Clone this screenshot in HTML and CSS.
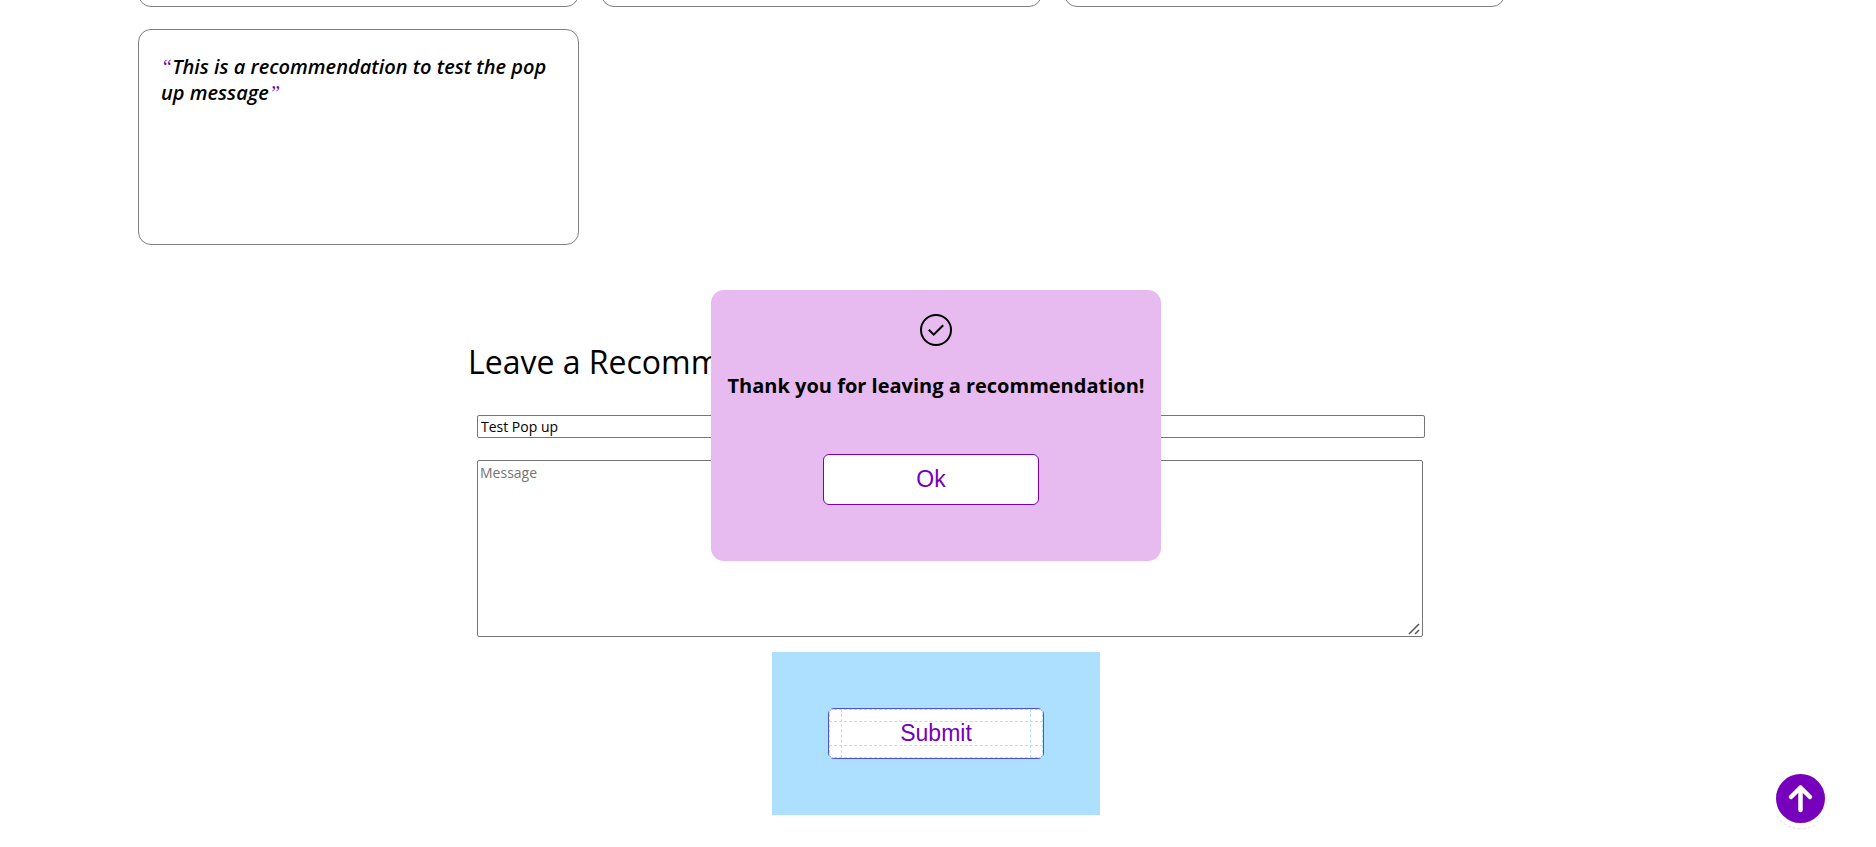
FILE: index.html
```html
<!DOCTYPE html>
<html lang="en">
<head>
<meta charset="utf-8">
<title>Recommendations</title>
<link rel="stylesheet" href="styles.css">
</head>
<body>
<main class="page">
  <section class="cards" aria-label="Recommendations">
    <blockquote class="card"></blockquote>
    <blockquote class="card"></blockquote>
    <blockquote class="card"></blockquote>
    <blockquote class="card"><span class="quote">“</span>This is a recommendation to test the pop up message<span class="quote">”</span></blockquote>
  </section>

  <form class="form">
    <div class="fields">
      <h2 class="title">Leave a Recommendation</h2>
      <input class="field name" type="text" value="Test Pop up" aria-label="Name">
      <textarea class="field message" placeholder="Message" aria-label="Message"></textarea>
    </div>
    <div class="submit-area">
      <button class="button submit" type="button">Submit
        <span class="guide guide-edge"></span>
        <span class="guide guide-rows"></span>
        <span class="guide guide-columns"></span>
      </button>
    </div>
  </form>
</main>

<div class="overlay">
  <div class="popup" role="dialog" aria-labelledby="popup-text">
    <svg class="check" viewBox="0 0 32 32" fill="none" stroke="#000" stroke-width="2" aria-hidden="true">
      <circle cx="16" cy="16" r="15"/>
      <path d="M8.800 15.800 13.700 20.700 23.200 11.200"/>
    </svg>
    <p class="popup-text" id="popup-text">Thank you for leaving a recommendation!</p>
    <button class="button ok" type="button">Ok</button>
  </div>
</div>

<a class="to-top" href="#" aria-label="Back to top">
  <svg viewBox="0 0 52 56" fill="none" aria-hidden="true">
    <path d="M2 42A28 28 0 0 0 40 51" stroke="#ead8f6" stroke-width="1" stroke-dasharray="3 2"/>
    <circle cx="25.500" cy="24.500" r="24.500" fill="#7600bc"/>
    <path d="M25.500 36V14M16 23 25.500 13.500 35 23" stroke="#fff" stroke-width="4.500" stroke-linecap="round" stroke-linejoin="round"/>
  </svg>
</a>
</body>
</html>
```
FILE: styles.css
```css
* { box-sizing: border-box; }

body {
  margin: 0;
  background: #fff;
  color: #000;
  font-family: "Trebuchet MS", "Open Sans", sans-serif;
  overflow: hidden;
}

.page {
  margin-top: -209px;
  padding-right: 4px;
}

.cards {
  display: grid;
  grid-template-columns: repeat(3, 1fr);
  gap: 22px;
  margin: 0 19.600% 0 138px;
}

.card {
  height: 216px;
  margin: 0;
  padding: 24px 22px;
  border: 1px solid #808080;
  border-radius: 13px;
  font-size: 20px;
  font-style: italic;
  font-weight: 600;
  line-height: 26px;
}

.quote {
  color: #7600bc;
  font-family: "Liberation Serif", serif;
  font-size: 20px;
  font-weight: 400;
  line-height: 20px;
}

.fields {
  display: flex;
  flex-direction: column;
  padding: 95px 24% 0 25%;
}

.title {
  margin: 0 0 31px;
  font-size: 32px;
  font-weight: 400;
  line-height: 44px;
}

.field {
  margin: 0 0 0 9px;
  border: 1px solid #767676;
  border-radius: 2px;
  background: #fff;
  font-family: inherit;
  font-size: 14px;
}

.name {
  height: 23px;
  margin-right: -2px;
  padding: 1px 3px;
}

.message {
  height: 177px;
  margin-top: 22px;
  padding: 2px;
}

.message::placeholder { color: #757575; }

.message::-webkit-resizer {
  background: url("data:image/svg+xml,%3Csvg xmlns='http://www.w3.org/2000/svg' viewBox='0 0 15 15'%3E%3Cpath d='M2 13 12 3M8 13l4-4' stroke='%23555' stroke-width='1.500'/%3E%3C/svg%3E") center / 100% no-repeat;
}

.submit-area {
  width: fit-content;
  margin: 15px auto 0;
  padding: 56px;
  background: #addfff;
}

.button {
  display: block;
  width: 216px;
  height: 51px;
  padding: 11px 12px 13px;
  border: 1px solid #7600bc;
  border-radius: 6px;
  background: #fff;
  color: #7600bc;
  font-family: "Liberation Sans", Arial, sans-serif;
  font-size: 23px;
  line-height: 24px;
}

.submit {
  position: relative;
  border-color: #4a50e0;
}

.guide {
  position: absolute;
  border: 0 dashed #addfff;
}

.guide-edge {
  inset: 0;
  border-width: 1px;
}

.guide-rows {
  inset: 12px 0;
  border-width: 1px 0;
}

.guide-columns {
  inset: 0 12px;
  border-width: 0 1px;
}

.overlay {
  position: fixed;
  inset: 0 4px 0 0;
  display: grid;
  place-items: center;
  pointer-events: none;
}

.popup {
  width: 450px;
  height: 271px;
  margin-top: 4px;
  padding: 24px 0;
  border-radius: 13px;
  background: #e8bbf0;
  pointer-events: auto;
}

.check {
  display: block;
  width: 32px;
  height: 32px;
  margin: 0 auto;
}

.popup-text {
  margin: 27px 0 55px;
  font-size: 20px;
  font-weight: 700;
  line-height: 26px;
  text-align: center;
  white-space: nowrap;
}

.ok { margin-left: 112px; }

.to-top {
  position: fixed;
  right: 49px;
  bottom: 17px;
  width: 52px;
  height: 56px;
}

.to-top svg { display: block; }
```
